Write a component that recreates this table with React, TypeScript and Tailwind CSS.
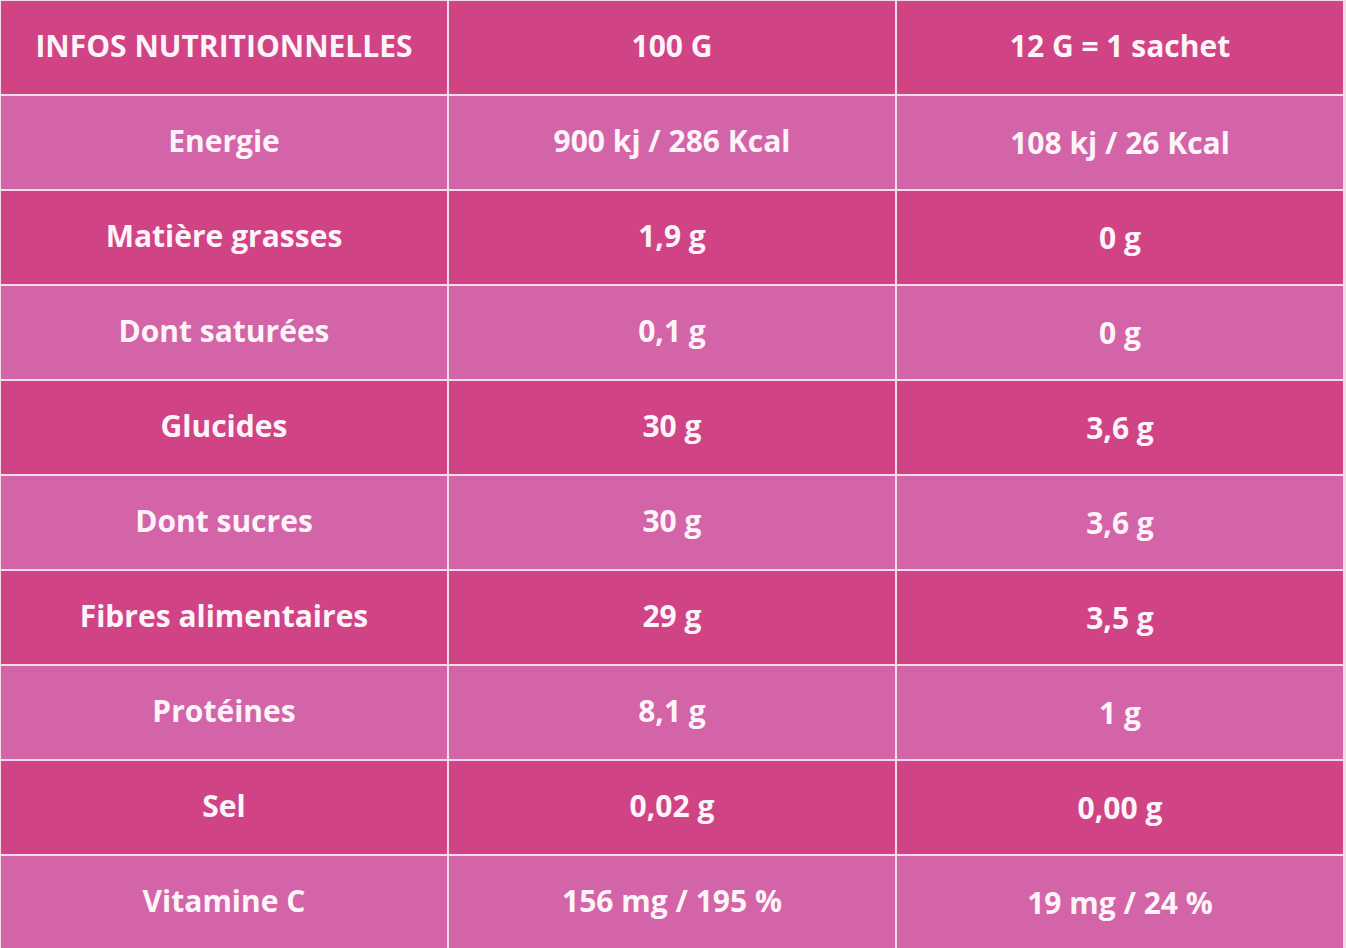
import React from 'react';

const rows: [string, string, string][] = [
  ['INFOS NUTRITIONNELLES', '100 G', '12 G = 1 sachet'],
  ['Energie', '900 kj / 286 Kcal', '108 kj / 26 Kcal'],
  ['Matière grasses', '1,9 g', '0 g'],
  ['Dont saturées', '0,1 g', '0 g'],
  ['Glucides', '30 g', '3,6 g'],
  ['Dont sucres', '30 g', '3,6 g'],
  ['Fibres alimentaires', '29 g', '3,5 g'],
  ['Protéines', '8,1 g', '1 g'],
  ['Sel', '0,02 g', '0,00 g'],
  ['Vitamine C', '156 mg / 195 %', '19 mg / 24 %'],
];

const App: React.FC = () => {
  return (
    <div
      className="w-[1346px] h-[948px] overflow-hidden bg-[#f4dbe8] pt-[1px] pl-[1px] pr-[3px]"
      style={{ fontFamily: '"Open Sans", "Liberation Sans", sans-serif' }}
    >
      <div className="grid grid-cols-3 gap-[2px]">
        {rows.map((row, i) =>
          row.map((cell, j) => (
            <div
              key={`${i}-${j}`}
              className={`flex items-center justify-center text-[30px] font-bold text-[#fdf4f9] ${
                i % 2 === 0 ? 'bg-[#d04385]' : 'bg-[#d464a8]'
              } ${i === rows.length - 1 ? 'h-[100px]' : 'h-[93px]'} ${
                i === rows.length - 1
                  ? j === 2 ? 'pb-[8px]' : 'pb-[12px]'
                  : j === 2 && i > 0 ? 'pb-[1px]' : 'pb-[4px]'
              }`}
            >
              {cell}
            </div>
          ))
        )}
      </div>
    </div>
  );
};

export default App;
